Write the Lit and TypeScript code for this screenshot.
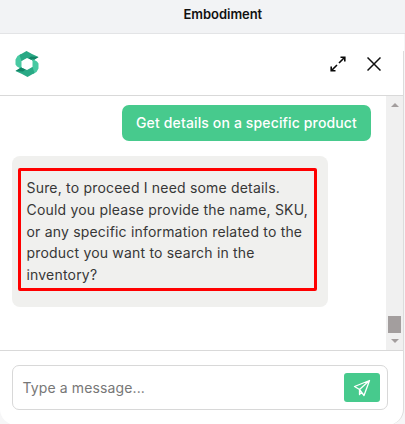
import { LitElement, html, css } from "lit";
import { customElement } from "lit/decorators.js";

@customElement("app-root")
export class AppRoot extends LitElement {
  static styles = css`
    :host { display: block; width: 405px; height: 424px; overflow: hidden; background: #f6f6f7; font-family: Inter, sans-serif; }
    * { box-sizing: border-box; }
    .page { height: 424px; display: flex; flex-direction: column; }
    .top { height: 34px; flex: none; background: #f2f3f5; border-bottom: 1px solid #e3e4e6; display: flex; padding: 4px 0 0 183.5px; font-size: 13px; line-height: 20px; font-weight: 600; color: #111; white-space: nowrap; letter-spacing: -0.04px; }
    .panel { height: 391px; flex: none; width: 404px; background: #fff; border-right: 1px solid #dcdcdc; border-radius: 0 0 16px 16px; display: flex; flex-direction: column; position: relative; }
    .corner { position: absolute; top: 0; right: -1px; width: 2px; height: 17px; background: #fff; }
    .head { height: 62px; flex: none; border-bottom: 1px solid #d9d9d9; display: flex; align-items: flex-start; padding: 17px 22px 0 15px; }
    .logo { width: 24px; height: 26px; }
    .expand { margin: 5px 21px 0 auto; }
    .close { margin-top: 6px; }
    svg { display: block; }
    .body { height: 254px; flex: none; display: flex; }
    .chat { flex: 1; padding: 9px 15px 0 12px; display: flex; flex-direction: column; gap: 15px; }
    .mine { align-self: flex-end; width: 249px; height: 36px; border-radius: 7px; background: #47ca8d; color: #fff; font-size: 14px; font-weight: 500; line-height: 36px; padding-left: 14px; white-space: nowrap; letter-spacing: 0.14px; }
    .bot { width: 316px; height: 151px; border-radius: 8px; background: #f0f0ee; padding: 12px 6px; }
    .frame { width: 299px; height: 123px; border: 3px solid #f00; border-radius: 2px; padding: 6px 0 0 5.5px; font-size: 14px; line-height: 21.75px; color: #373737; white-space: nowrap; letter-spacing: 0.19px; }
    .scroll { width: 17px; background: #f0f0f0; display: flex; flex-direction: column; align-items: center; padding: 6px 0 6px; }
    .thumb { width: 13px; height: 17px; margin: auto 0 6px; background: #a39e9e; }
    .foot { flex: 1; border-top: 1px solid #d9d9d9; padding: 14px 0 0 12px; }
    .input { width: 376px; height: 45px; border: 1px solid #d8d8d8; border-radius: 7px; display: flex; align-items: center; justify-content: space-between; padding: 0 7px 0 9.5px; font-size: 14px; color: #777; letter-spacing: 0.12px; }
    .send { width: 36px; height: 29px; border: 0; padding: 0; border-radius: 3px; background: #47ca8d; display: grid; place-items: center; }
  `;

  render() {
    return html`
      <div class="page">
        <div class="top">Embodiment</div>
        <div class="panel">
          <div class="corner"></div>
          <div class="head">
            <svg class="logo" viewBox="0 0 24 26">
              <path d="M6 3 2.500 5 .5 8.500v5L2 15.500 5.500 17.500H7.500L6.500 16V10L10.500 7z" fill="#48c9a2" />
              <path d="M4.500 4 11.500 0 17 3 23.500 6 18 9.500 12 7 6.500 10z" fill="#29a985" />
              <path d="M16 5.500 23.500 6 18 9.500 13.500 7.500z" fill="#128466" />
              <path d="M18 23 21.500 21 23.500 17.500v-5L22 10.500 18.500 8.500H16.500L17.500 10V16L13.500 19z" fill="#48c9a2" />
              <path d="M19.500 22 12.500 26 7 23 .5 20 6 16.500 12 19 17.500 16z" fill="#29a985" />
              <path d="M8 20.500.5 20 6 16.500 10.500 18.500z" fill="#128466" />
            </svg>
            <svg class="expand" width="16" height="16" viewBox="0 0 16 16" fill="none" stroke="#080808" stroke-width="1.600">
              <path d="M9 7 14.500 1.500M10.500 1.200h4.300v4.300M7 9 1.500 14.500M1.200 10.500v4.300h4.300" />
            </svg>
            <svg class="close" width="14" height="14" viewBox="0 0 14 14" fill="none" stroke="#111" stroke-width="1.500">
              <path d="M.5.5l13 13M13.500.5l-13 13" />
            </svg>
          </div>
          <div class="body">
            <div class="chat">
              <div class="mine">Get details on a specific product</div>
              <div class="bot">
                <div class="frame">Sure, to proceed I need some details.<br />Could you please provide the name, SKU,<br />or any specific information related to the<br />product you want to search in the<br />inventory?</div>
              </div>
            </div>
            <div class="scroll">
              <svg width="8" height="5" viewBox="0 0 8 5"><path d="M0 5 4 1l4 4z" fill="#a39e9e" /></svg>
              <div class="thumb"></div>
              <svg width="8" height="5" viewBox="0 0 8 5"><path d="M0 0h8L4 4z" fill="#a39e9e" /></svg>
            </div>
          </div>
          <div class="foot">
            <div class="input">
              <span>Type a message...</span>
              <button class="send" aria-label="Send">
                <svg width="18" height="18" viewBox="0 0 18 18" fill="none" stroke="#fff" stroke-width="1.300" stroke-linejoin="round">
                  <path d="M16.500 1.500 1.500 7.500 6.500 10.500 11 16.500zM16.500 1.500 6.500 10.500V15.500L8.500 13" />
                </svg>
              </button>
            </div>
          </div>
        </div>
      </div>
    `;
  }
}
